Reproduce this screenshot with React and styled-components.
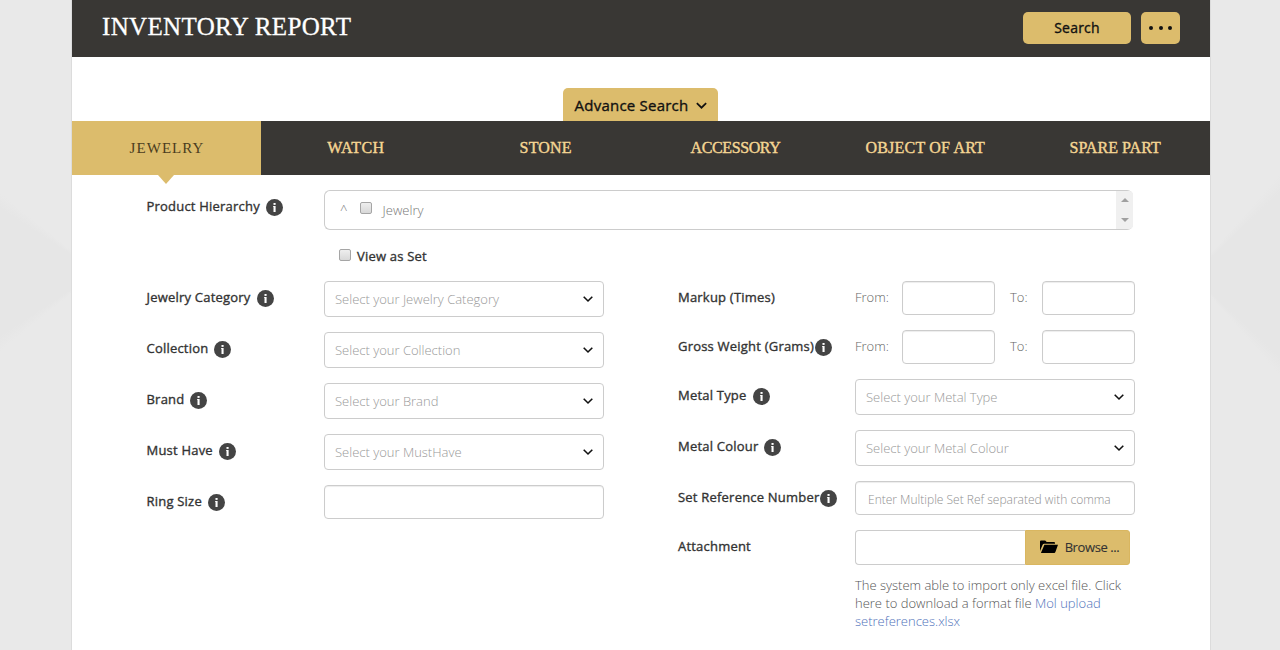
import React from "react";
import styled, { createGlobalStyle } from "styled-components";

const GOLD = "#dcbc6c";
const DARK = "#393734";

const Global = createGlobalStyle`
  *, *::before, *::after { box-sizing: border-box; }
  body {
    margin: 0;
    height: 650px;
    overflow: hidden;
    font-family: "Open Sans", sans-serif;
    font-size: 13px;
    color: #333;
    background: #e9e9e9;
  }
  button, input { font-family: inherit; margin: 0; }
`;

const Shell = styled.div`
  display: grid;
  grid-template-columns: 71px 1140px 69px;
  height: 650px;
`;

const Side = styled.div`
  background: conic-gradient(
    at ${(p) => p.$apex},
    #e9e9e9 ${(p) => p.$from - 4}deg,
    #e6e6e6 ${(p) => p.$from + 2}deg ${(p) => p.$to - 2}deg,
    #e9e9e9 ${(p) => p.$to + 4}deg
  );
`;

const Page = styled.main`
  background: #fff;
  border: solid #dcdcdc;
  border-width: 0 1px;
`;

const Header = styled.header`
  display: flex;
  align-items: flex-start;
  justify-content: space-between;
  height: 57px;
  padding: 12px 30px 0;
  background: ${DARK};
`;

const Title = styled.h1`
  margin: 0;
  font: 400 25px/29px "Liberation Serif", serif;
  letter-spacing: 0.35px;
  color: #fff;
  -webkit-text-stroke: 0.3px #fff;
`;

const Actions = styled.div`
  display: flex;
  gap: 10px;
`;

const GoldButton = styled.button`
  display: flex;
  align-items: center;
  justify-content: center;
  gap: 4px;
  width: ${(p) => p.$width}px;
  height: 32px;
  padding: 0 0 1px;
  border: 0;
  border-radius: 5px;
  background: ${GOLD};
  color: #111;
  font-size: 14px;
  letter-spacing: 0.2px;
  -webkit-text-stroke: 0.35px #111;
`;

const Dot = styled.span`
  width: 4px;
  height: 4px;
  margin: 1px 0.8px 0;
  border-radius: 50%;
  background: #111;
`;

const AdvanceBar = styled.div`
  display: flex;
  justify-content: center;
  height: 64px;
  padding-top: 31px;
`;

const AdvanceButton = styled.button`
  display: flex;
  align-items: center;
  justify-content: center;
  gap: 7px;
  width: 155px;
  height: 33px;
  margin-right: 1px;
  padding: 1px 0 0 2px;
  border: 0;
  border-radius: 5px 5px 0 0;
  background: ${GOLD};
  color: #111;
  font-size: 15px;
  letter-spacing: 0.22px;
  white-space: nowrap;
  -webkit-text-stroke: 0.35px #111;
`;

const Tabs = styled.nav`
  display: grid;
  grid-template-columns: 189px repeat(5, 1fr);
  height: 54px;
  background: ${DARK};
`;

const Tab = styled.div`
  position: relative;
  display: flex;
  align-items: center;
  justify-content: center;
  padding-left: ${(p) => (p.$active ? 1 : 0)}px;
  font: ${(p) => (p.$active ? 15 : 16)}px/20px "Liberation Serif", serif;
  letter-spacing: ${(p) => p.$spacing}px;
  color: ${(p) => (p.$active ? "#4b3d20" : "#f5d693")};
  background: ${(p) => (p.$active ? GOLD : "transparent")};
  -webkit-text-stroke: ${(p) => (p.$active ? "0" : "0.4px #f5d693")};

  &::after {
    content: "";
    display: ${(p) => (p.$active ? "block" : "none")};
    position: absolute;
    top: 100%;
    left: calc(50% - 8.5px);
    border: solid transparent;
    border-width: 9px 8px 0;
    border-top-color: ${GOLD};
  }
`;

const Form = styled.form`
  padding: 15px 75px 0 74.5px;
`;

const Columns = styled.div`
  display: grid;
  grid-template-columns: 457.5px 457px;
  column-gap: 74px;
`;

const Column = styled.div`
  display: flex;
  flex-direction: column;
  gap: 15px;
`;

const Row = styled.div`
  display: grid;
  grid-template-columns: ${(p) => p.$label || 177}px 1fr;
  align-items: start;
`;

const Label = styled.label`
  display: flex;
  align-items: center;
  gap: ${(p) => (p.$tight ? 0.5 : 6)}px;
  height: 34px;
  letter-spacing: 0.21px;
  white-space: nowrap;
  -webkit-text-stroke: 0.35px #333;
`;

const LabelText = styled.span`
  position: relative;
  top: -1px;
`;

const InfoSvg = styled.svg`
  flex: none;
  width: 17px;
  height: 17px;
  margin-top: 1px;
`;

const Hierarchy = styled.div`
  display: flex;
  align-items: center;
  width: 809px;
  height: 40px;
  padding-left: 15px;
  border: 1px solid #ccc;
  border-right: 0;
  border-radius: 6px;
  color: #777;
  font-weight: 300;
`;

const Caret = styled.span`
  width: 20px;
  font-size: 13px;
`;

const Check = styled.span`
  flex: none;
  width: 12px;
  height: 12px;
  margin-bottom: ${(p) => p.$lift || 0}px;
  border: 1px solid #a5a5a5;
  border-radius: 2px;
  background: linear-gradient(#eee, #d8d8d8);
`;

const NodeName = styled.span`
  margin-left: 10.6px;
`;

const Scrollbar = styled.div`
  display: flex;
  flex-direction: column;
  justify-content: space-between;
  align-items: center;
  width: 17px;
  height: 38px;
  margin-left: auto;
  padding: 7px 0;
  border-radius: 0 4px 4px 0;
  background: #f0f0f0;
`;

const Arrow = styled.i`
  border: solid transparent;
  border-width: ${(p) => (p.$up ? "0 4px 4px" : "4px 4px 0")};
  border-${(p) => (p.$up ? "bottom" : "top")}-color: #a0a0a0;
`;

const ViewAsSet = styled.div`
  display: flex;
  align-items: center;
  gap: 6px;
  height: 51px;
  padding: 0 0 0 192.5px;
  letter-spacing: 0.2px;
  -webkit-text-stroke: 0.35px #333;
`;

const Select = styled.div`
  display: flex;
  align-items: center;
  justify-content: space-between;
  height: 36px;
  padding: 0 9px 0 10px;
  border: 1px solid #ccc;
  border-radius: 4px;
  color: #999;
  font-weight: 300;
`;

const Input = styled.input`
  width: ${(p) => p.$width || 280}px;
  height: ${(p) => p.$height || 34}px;
  padding: 3px 12px 0;
  border: 1px solid #ccc;
  border-radius: 4px;
  background: #fff;
  box-shadow: inset 0 1px 1px rgba(0, 0, 0, 0.075);
  font-size: 12px;
  font-weight: 300;

  &::placeholder { color: #909090; opacity: 1; }
`;

const Range = styled.div`
  display: grid;
  grid-template-columns: 47px 93px 47px 93px;
  align-items: center;
  color: #666;
  font-weight: 300;
`;

const RangeLabel = styled.span`
  padding: 0 0 2px ${(p) => p.$indent || 0}px;
`;

const FileField = styled.div`
  display: flex;

  ${Input} { border-right: 0; border-radius: 4px 0 0 4px; box-shadow: none; }
`;

const Browse = styled.button`
  display: flex;
  align-items: center;
  justify-content: center;
  gap: 7px;
  width: 105px;
  height: 35px;
  padding: 0 0 2px 4px;
  border: 1px solid #d9b660;
  border-radius: 0 3px 3px 0;
  background: ${GOLD};
  color: #333;
  font-size: 13px;
  letter-spacing: -0.4px;
  white-space: nowrap;
  -webkit-text-stroke: 0.1px #333;
`;

const Note = styled.p`
  width: 280px;
  margin: 11px 0 0;
  color: #555;
  font-weight: 300;
  line-height: 18px;
`;

const FileLink = styled.a`
  color: #4f72ba;
`;

const Info = () => (
  <InfoSvg viewBox="0 0 17 17">
    <circle cx="8.5" cy="8.5" r="8.5" fill="#444" />
    <rect x="7.5" y="4" width="2.1" height="1.9" fill="#fff" />
    <path d="M7 7h2.6v6H7.5V7.8H7z" fill="#fff" />
  </InfoSvg>
);

const Chevron = ({ size = 12 }) => (
  <svg width={size} height={size} viewBox="0 0 12 12" fill="none">
    <path d="M1.7 3.8L6 8l4.3-4.2" stroke="#111" strokeWidth="1.6" />
  </svg>
);

const Folder = () => (
  <svg width="18" height="14" viewBox="0 0 18 14">
    <path d="M0 11V1.5Q0 .5 1 .5h4.2L6.7 2H14q1 0 1 1v.7H4.2Q3 3.7 2.5 5z" fill="#000" />
    <path d="M4.4 4.7H18L15.4 12q-.3 1-1.2 1H.9z" fill="#000" />
  </svg>
);

const Field = ({ name, info = true, tight, label, children }) => (
  <Row $label={label}>
    <Label $tight={tight}>
      <LabelText>{name}</LabelText>
      {info && <Info />}
    </Label>
    {children}
  </Row>
);

const Dropdown = ({ children }) => (
  <Select>
    <span>{children}</span>
    <Chevron />
  </Select>
);

const FromTo = () => (
  <Range>
    <RangeLabel>From:</RangeLabel>
    <Input $width={93} />
    <RangeLabel $indent={15}>To:</RangeLabel>
    <Input $width={93} />
  </Range>
);

const TABS = [
  { name: "JEWELRY", spacing: 1.05 },
  { name: "WATCH", spacing: 0.4 },
  { name: "STONE", spacing: 0.2 },
  { name: "ACCESSORY", spacing: -0.4 },
  { name: "OBJECT OF ART", spacing: 0.2 },
  { name: "SPARE PART", spacing: 0.05 },
];

export default function App() {
  return (
    <>
      <Global />
      <Shell>
        <Side $apex="98px 272px" $from={235} $to={305} />
        <Page>
          <Header>
            <Title>INVENTORY REPORT</Title>
            <Actions>
              <GoldButton $width={108}>Search</GoldButton>
              <GoldButton $width={39} aria-label="More">
                <Dot /><Dot /><Dot />
              </GoldButton>
            </Actions>
          </Header>
          <AdvanceBar>
            <AdvanceButton>
              Advance Search <Chevron size={13} />
            </AdvanceButton>
          </AdvanceBar>
          <Tabs>
            {TABS.map(({ name, spacing }, i) => (
              <Tab key={name} $active={i === 0} $spacing={spacing}>{name}</Tab>
            ))}
          </Tabs>
          <Form>
            <Field name="Product Hierarchy" label={177.5}>
              <Hierarchy>
                <Caret>^</Caret>
                <Check $lift={4} />
                <NodeName>Jewelry</NodeName>
                <Scrollbar><Arrow $up /><Arrow /></Scrollbar>
              </Hierarchy>
            </Field>
            <ViewAsSet><Check $lift={1} />View as Set</ViewAsSet>
            <Columns>
              <Column>
                <Field name="Jewelry Category" label={177.5}><Dropdown>Select your Jewelry Category</Dropdown></Field>
                <Field name="Collection" label={177.5}><Dropdown>Select your Collection</Dropdown></Field>
                <Field name="Brand" label={177.5}><Dropdown>Select your Brand</Dropdown></Field>
                <Field name="Must Have" label={177.5}><Dropdown>Select your MustHave</Dropdown></Field>
                <Field name="Ring Size" label={177.5}><Input /></Field>
              </Column>
              <Column>
                <Field name="Markup (Times)" info={false}><FromTo /></Field>
                <Field name="Gross Weight (Grams)" tight><FromTo /></Field>
                <Field name="Metal Type"><Dropdown>Select your Metal Type</Dropdown></Field>
                <Field name="Metal Colour"><Dropdown>Select your Metal Colour</Dropdown></Field>
                <Field name="Set Reference Number" tight>
                  <Input placeholder="Enter Multiple Set Ref separated with comma" />
                </Field>
                <Field name="Attachment" info={false}>
                  <div>
                    <FileField>
                      <Input $width={170} $height={35} />
                      <Browse type="button"><Folder />Browse ...</Browse>
                    </FileField>
                    <Note>
                      The system able to import only excel file. Click here to download a format file{" "}
                      <FileLink>Mol upload setreferences.xlsx</FileLink>
                    </Note>
                  </div>
                </Field>
              </Column>
            </Columns>
          </Form>
        </Page>
        <Side $apex="-19px 275px" $from={45} $to={135} />
      </Shell>
    </>
  );
}
